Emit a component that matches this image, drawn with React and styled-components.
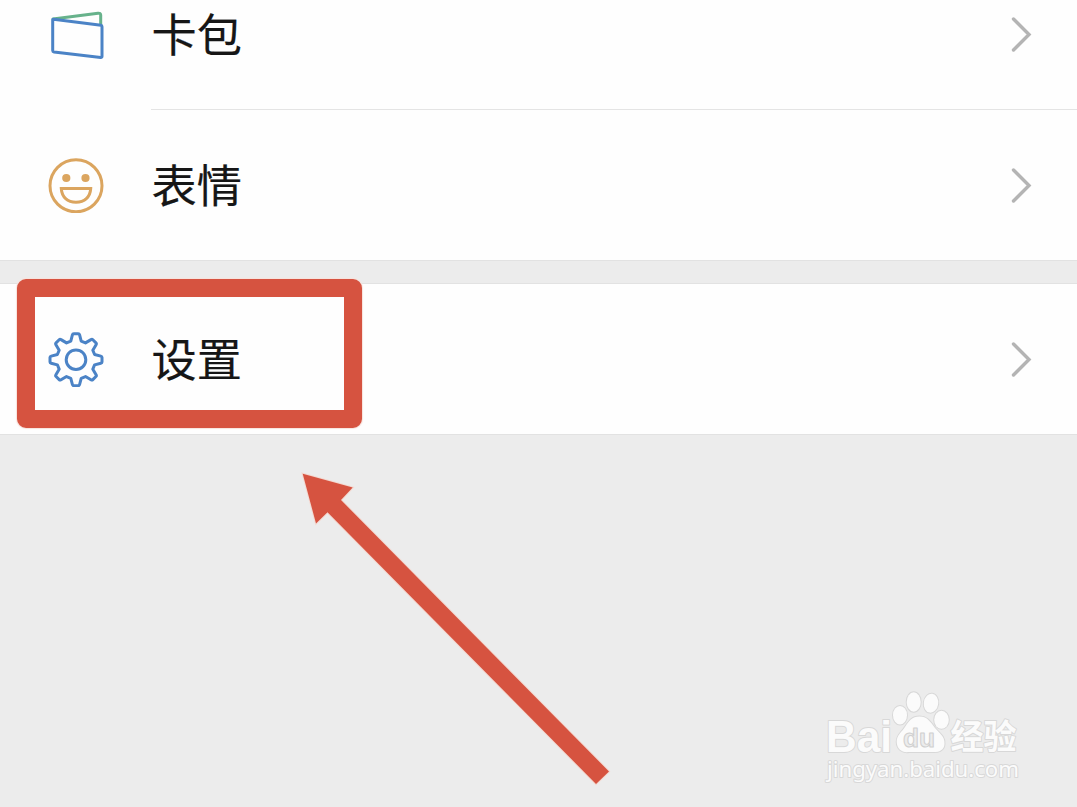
import React from 'react'
import styled, { createGlobalStyle } from 'styled-components'

const GlobalStyle = createGlobalStyle`
  body {
    margin: 0;
    background: #ececec;
    font-family: "Noto Sans CJK SC", "Noto Sans", sans-serif;
  }
`

const Page = styled.div`
  position: relative;
  height: 807px;
  overflow: hidden;
  background: #ececec;
`

const List = styled.div`
  display: flex;
  flex-direction: column;
  gap: 22px;
`

const Group = styled.div`
  background: #fefefe;
  border-bottom: 1px solid #e2e2e2;
  border-top: 1px solid #e2e2e2;

  /* the page is scrolled into the first group */
  &:first-child {
    margin-top: -42px;
  }
`

const Row = styled.div`
  display: flex;
  align-items: center;
  height: 150px;
  padding-left: 48px;
`

const Divider = styled.div`
  height: 1px;
  margin-left: 151px;
  background: #e4e4e4;
`

const RowIcon = styled.svg`
  width: 56px;
  height: 56px;
  flex: none;
  fill: none;
  stroke: ${props => props.$color};
  stroke-width: 3;
  stroke-linejoin: round;
  stroke-linecap: round;
`

const Label = styled.span`
  flex: 1;
  margin-left: 47.5px;
  padding-bottom: 2px;
  font-size: 45.2px;
  line-height: 64px;
  color: #161616;
  -webkit-text-stroke: 0.2px #161616;
`

const Chevron = styled.svg`
  width: 24px;
  height: 40px;
  margin-right: 44px;
  fill: none;
  stroke: #b4b4b4;
  stroke-width: 3.4;
  stroke-linecap: round;
`

const Highlight = styled.div`
  position: absolute;
  left: 17px;
  top: 279px;
  width: 309px;
  height: 113px;
  border: 18px solid #d65340;
  border-radius: 9px;
  box-shadow: 0 0 1px 1px #f8e3dd;
`

const Arrow = styled.svg`
  position: absolute;
  left: 290px;
  top: 460px;
  width: 330px;
  height: 335px;
  fill: #d65340;
  stroke: #f3d9d1;
  stroke-width: 2;
  paint-order: stroke;
`

const Watermark = styled.svg`
  position: absolute;
  left: 815px;
  top: 680px;
  width: 220px;
  height: 115px;
  fill: #fbfbfb;
  stroke: #d8d8d8;
  stroke-width: 2;
  stroke-linejoin: round;
  paint-order: stroke;
`

function point(x, y, turn) {
  const a = (turn * Math.PI) / 4
  const px = x * Math.cos(a) - y * Math.sin(a)
  const py = x * Math.sin(a) + y * Math.cos(a)
  return `${(28 + px).toFixed(2)} ${(28.7 + py).toFixed(2)}`
}

function gearPath() {
  let d = ''
  for (let i = 0; i < 8; i++) {
    d += `${i ? 'L' : 'M'}${point(-5.2, -18.6, i)}`
    d += `L${point(-3.6, -24.8, i)}`
    d += `Q${point(-3.3, -26, i)} ${point(-2.2, -26, i)}`
    d += `L${point(2.2, -26, i)}`
    d += `Q${point(3.3, -26, i)} ${point(3.6, -24.8, i)}`
    d += `L${point(5.2, -18.6, i)}`
  }
  return d + 'Z'
}

function CardsIcon() {
  return (
    <RowIcon viewBox="0 0 56 56" $color="#4b83c6">
      <path d="M5 13L50 7.2Q52.7 6.9 52.7 9V18.5" stroke="#67b28b" />
      <path d="M5.5 13.3L53 19.3Q54 19.5 54 20.7V50.3Q54 51.6 52.7 51.5L6 46Q4.7 45.8 4.7 44.6V14.2Q4.7 13.2 5.5 13.3Z" />
    </RowIcon>
  )
}

function StickerIcon() {
  return (
    <RowIcon viewBox="0 0 56 56" $color="#dba55f">
      <circle cx="28" cy="28.8" r="26" />
      <g fill="#dba55f" stroke="none">
        <circle cx="18.3" cy="21" r="4.1" />
        <circle cx="37.5" cy="21" r="4.1" />
      </g>
      <path d="M13.3 31.6H42.7C42.2 40 36.5 45.2 28 45.2S13.8 40 13.3 31.6Z" strokeLinejoin="miter" />
    </RowIcon>
  )
}

function SettingsIcon() {
  return (
    <RowIcon viewBox="0 0 56 56" $color="#4b83c6">
      <path d={gearPath()} />
      <circle cx="28" cy="28.7" r="9.8" />
    </RowIcon>
  )
}

function Item({icon, name}) {
  return (
    <Row>
      {icon}
      <Label>{name}</Label>
      <Chevron viewBox="0 0 24 40">
        <path d="M4.5 5L20 20.5L4.5 36" />
      </Chevron>
    </Row>
  )
}

function BaiduMark() {
  return (
    <Watermark viewBox="815 680 220 115">
      <text x="826" y="751.5" fontFamily="Liberation Sans" fontWeight="700" fontSize="45" textLength="66" lengthAdjust="spacingAndGlyphs">Bai</text>
      <ellipse cx="900" cy="715.2" rx="7" ry="9.3" />
      <ellipse cx="913.7" cy="702" rx="7" ry="9.7" />
      <ellipse cx="931" cy="703.2" rx="7.2" ry="9.5" transform="rotate(8 931 703.2)" />
      <ellipse cx="941.5" cy="719.8" rx="7.3" ry="9" />
      <path d="M919.5 716.5C928 716.5 931 723 935 728C939 733 945 736 944.5 744C944 751 938 752.5 932 752H909C902 753 897 749 896.7 742C896.5 735 902 732 905 727C909 721 912 716.5 919.5 716.5Z" />
      <text x="903" y="747" fontFamily="Liberation Sans" fontWeight="700" fontSize="25" textLength="32" lengthAdjust="spacingAndGlyphs" fill="#ececec" stroke="#d0d0d0" strokeWidth="1" paintOrder="normal">du</text>
      <text x="950.5" y="748.8" fontFamily="Noto Sans CJK SC" fontWeight="700" fontSize="34" textLength="66" lengthAdjust="spacingAndGlyphs">经验</text>
      <text x="827" y="777" fontFamily="Noto Sans" fontSize="22" textLength="192" lengthAdjust="spacingAndGlyphs">jingyan.baidu.com</text>
    </Watermark>
  )
}

export default function App() {
  return (
    <Page>
      <GlobalStyle />
      <List>
        <Group>
          <Item icon={<CardsIcon />} name="卡包" />
          <Divider />
          <Item icon={<StickerIcon />} name="表情" />
        </Group>
        <Group>
          <Item icon={<SettingsIcon />} name="设置" />
        </Group>
      </List>
      <Highlight />
      <Arrow viewBox="290 460 330 335">
        <path d="M302.7 473.7L352.7 487.5L341 500L609 771.5L596 784L327.5 512.3L316 523.5Z" />
      </Arrow>
      <BaiduMark />
    </Page>
  )
}
